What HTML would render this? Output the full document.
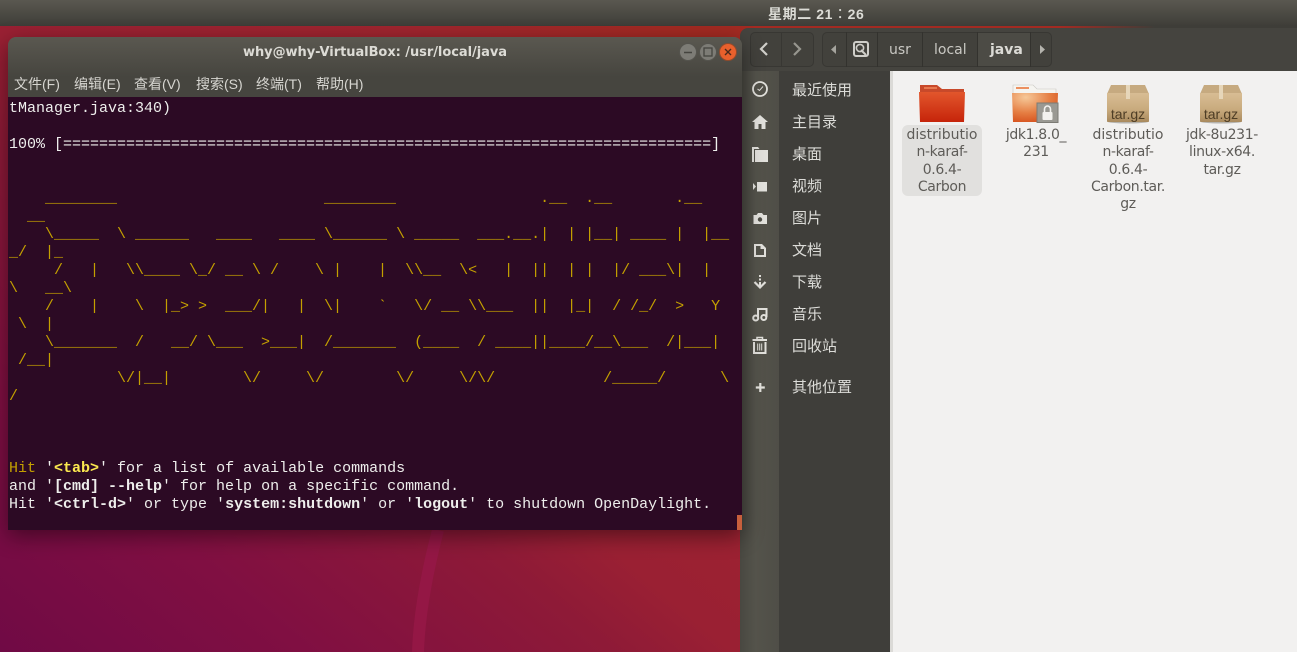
<!DOCTYPE html>
<html><head><meta charset="utf-8"><style>
html,body{margin:0;padding:0;width:1297px;height:652px;overflow:hidden;background:#8a1838}
*{box-sizing:border-box}
.a{position:absolute;white-space:pre}
#wall{position:absolute;left:0;top:26px;width:1297px;height:626px;background:linear-gradient(40deg,#700a45 0,#800f42 15%,#8e1a37 30%,#9a2033 36%,#a0252f 56%,#a32a22 70%)}
#top{position:absolute;left:0;top:0;width:1297px;height:26px;background:linear-gradient(#5a5850,#3e3d38)}
#term{position:absolute;left:8px;top:37px;width:734px;height:493px;border-radius:8px 8px 0 0;background:linear-gradient(#5a5850 0,#46453f 40px);box-shadow:0 6px 22px rgba(0,0,0,.45)}
#tb{position:absolute;left:8px;top:97px;width:734px;height:433px;background:#2c0a24}
.t{position:absolute;left:9px;font:15px/18px "Liberation Mono",monospace;white-space:pre;color:#eeeeec;height:18px}
.y{color:#c4a000}
b{font-weight:bold}
.m{position:absolute;top:75px;font:14px/18px "Liberation Sans","Noto Sans CJK SC",sans-serif;color:#d6d5d0;white-space:pre}
.s{position:absolute;left:792px;font:15px/20px "Noto Sans CJK SC",sans-serif;color:#dcdcd8;white-space:pre}
.f{position:absolute;font:14px/17.3px "DejaVu Sans",sans-serif;color:#5e5c58;text-align:center;white-space:pre;letter-spacing:-.35px}
.f i{font-style:normal;letter-spacing:0}
.p{position:absolute;top:40px;font:14px/20px "DejaVu Sans",sans-serif;color:#c9c8c3;white-space:pre}
</style></head><body>
<div id="wall"></div>
<svg class="a" style="left:0;top:0" width="1297" height="652"><path d="M438 530C425 580 419 620 418 652" fill="none" stroke="#941745" stroke-width="12"/></svg>
<div id="top"></div>
<div class="a" style="left:768px;top:5px;font:bold 14px/18px 'Liberation Sans','Noto Sans CJK SC',sans-serif;color:#dcdcd6;letter-spacing:.6px">星期二 21<span style="font-family:'Noto Sans CJK TC',sans-serif;font-weight:normal">：</span>26</div>

<!-- Nautilus -->
<div class="a" style="left:1060px;top:26px;width:237px;height:2px;background:linear-gradient(90deg,rgba(62,61,56,0),#3e3d38 40%)"></div>
<div class="a" style="left:740px;top:28px;width:557px;height:43px;background:#45443f;border-radius:8px 0 0 0"></div>
<div class="a" style="left:740px;top:71px;width:39px;height:581px;background:linear-gradient(90deg,#494841,#54534b 40%,#4f4e47)"></div>
<div class="a" style="left:779px;top:71px;width:111px;height:581px;background:#3f3e3a"></div>
<div class="a" style="left:890px;top:71px;width:407px;height:581px;background:#f2f1f0;border-left:3px solid #dbdad7"></div>

<div class="a" style="left:750px;top:32px;width:64px;height:35px;border:1px solid #383733;border-radius:5px;background:#42413c"></div>
<div class="a" style="left:781px;top:32px;width:1px;height:35px;background:#383733"></div>
<div class="a" style="left:822px;top:32px;width:230px;height:35px;border:1px solid #383733;border-radius:5px;background:#42413c"></div>
<div class="a" style="left:978px;top:33px;width:52px;height:33px;background:#4c4b45"></div>
<div class="a" style="left:846px;top:32px;width:1px;height:35px;background:#33322e"></div>
<div class="a" style="left:877px;top:32px;width:1px;height:35px;background:#33322e"></div>
<div class="a" style="left:922px;top:32px;width:1px;height:35px;background:#33322e"></div>
<div class="a" style="left:977px;top:32px;width:1px;height:35px;background:#33322e"></div>
<div class="a" style="left:1030px;top:32px;width:1px;height:35px;background:#33322e"></div>
<svg class="a" style="left:740px;top:30px" width="320" height="40">
<path d="M27 13l-6 6 6 6" fill="none" stroke="#d0cfca" stroke-width="2.2"/>
<path d="M54 13l6 6-6 6" fill="none" stroke="#97968f" stroke-width="2.2"/>
<path d="M96 15v9l-5-4.500z" fill="#a5a49e"/>
<path d="M300 15v9l5-4.500z" fill="#b5b4ae"/>
<rect x="114" y="12" width="14" height="14" rx="2" fill="none" stroke="#cfcec9" stroke-width="2"/>
<circle cx="120" cy="18" r="3.6" fill="none" stroke="#cfcec9" stroke-width="1.6"/><path d="M121 20l5 5" stroke="#cfcec9" stroke-width="2"/>
</svg>
<div class="p" style="left:889px">usr</div>
<div class="p" style="left:934px">local</div>
<div class="p" style="left:990px;font-weight:bold;color:#dcdbd6">java</div>

<!-- sidebar icons -->
<svg class="a" style="left:750px;top:78px" width="20" height="320" fill="none" stroke="#e2e1dc">
<circle cx="10" cy="11" r="7" stroke-width="1.8"/><path d="M7.500 11l2 1.500L13 8.500" stroke-width="1"/>
<path d="M2 44l8-7 8 7h-2.500v7h-4v-5h-3v5h-4v-7z" fill="#e2e1dc" stroke="none"/>
<path d="M2 69h6l1.500 2H4v13H2zM5 72h13v12H5z" fill="#e2e1dc" stroke="none"/>
<path d="M7 104h10v9.500H7zM3 105l3 3.500-3 3.500z" fill="#e2e1dc" stroke="none"/>
<path d="M3.500 137h3l1.500-2h4l1.500 2h3.500v9H3.500z" fill="#e2e1dc" stroke="none"/><circle cx="10" cy="141.500" r="2.200" fill="#4f4e47" stroke="none"/>
<path d="M4 166h8l4 4v9H4zM6 168v9h8v-6h-3.500v-3z" fill="#e2e1dc" stroke="none" fill-rule="evenodd"/>
<path d="M10 197v2M10 200.500v2M10 204v4" stroke-width="2"/><path d="M4.500 204l5.500 5.500 5.500-5.500" stroke-width="2.200"/>
<path d="M8 239v-8h8.500v8" stroke-width="2"/><circle cx="5.700" cy="240" r="2.500" stroke-width="2"/><circle cx="13.800" cy="239.500" r="2.500" stroke-width="2"/>
<path d="M2.500 262h14.500" stroke-width="2"/><path d="M7 261v-1.500h5.500v1.500" stroke-width="1.500"/><path d="M4 264v11h11.500v-11" stroke-width="2"/><path d="M7.700 265.500v7M9.700 265.500v7M11.700 265.500v7" stroke-width="1"/>
<path d="M10.300 305v9M5.800 309.500h9" stroke-width="2.200"/>
</svg>
<div class="s" style="top:80px">最近使用</div>
<div class="s" style="top:112px">主目录</div>
<div class="s" style="top:144px">桌面</div>
<div class="s" style="top:176px">视频</div>
<div class="s" style="top:208px">图片</div>
<div class="s" style="top:240px">文档</div>
<div class="s" style="top:272px">下载</div>
<div class="s" style="top:304px">音乐</div>
<div class="s" style="top:336px">回收站</div>
<div class="s" style="top:377px">其他位置</div>

<!-- files -->
<div class="a" style="left:902px;top:125px;width:80px;height:71px;background:#e1e0de;border-radius:6px"></div>
<svg class="a" style="left:915px;top:80px" width="340" height="48">
<defs>
<linearGradient id="r" x1="0" y1="0" x2="0" y2="1"><stop offset="0" stop-color="#e2562c"/><stop offset="1" stop-color="#c6240a"/></linearGradient>
<radialGradient id="o" cx=".3" cy=".15" r=".9"><stop offset="0" stop-color="#f6c898"/><stop offset=".6" stop-color="#e57d42"/><stop offset="1" stop-color="#d6521e"/></radialGradient>
<linearGradient id="k" x1="0" y1="0" x2="0" y2="1"><stop offset="0" stop-color="#d8bd94"/><stop offset=".55" stop-color="#c9ab7e"/><stop offset="1" stop-color="#a98a5e"/></linearGradient>
</defs>
<path d="M5 5h17l5 4h22v6H5z" fill="#c8492a"/><rect x="9" y="7" width="13" height="2" fill="#e8784f"/>
<path d="M4 12h46l-1 30H5z" fill="url(#r)"/>
<path d="M98 5h20l4 4h19v8H98z" fill="#f5f4f0" stroke="#c9c7c2" stroke-width=".6"/><rect x="101" y="7" width="13" height="2" fill="#ec9060"/>
<path d="M97 13h46l-1 29H98z" fill="url(#o)"/>
<rect x="122" y="23" width="21" height="19.500" fill="#9a9993" stroke="#7c7b75"/>
<rect x="127.500" y="32" width="10" height="8" rx="1" fill="#f3f2ef"/><path d="M129.500 32v-3a3 3 0 0 1 6 0v3" fill="none" stroke="#f3f2ef" stroke-width="1.600"/>
<ellipse cx="213" cy="41.500" rx="21" ry="2" fill="#9b9892" opacity=".7"/>
<path d="M196 5h34l4 9h-42z" fill="#c6aa80"/>
<path d="M192 13h42v28a1 1 0 0 1-1 1h-40a1 1 0 0 1-1-1z" fill="url(#k)"/>
<rect x="211" y="5" width="4" height="14" fill="#e6d6b9"/>
<text x="213" y="39" text-anchor="middle" font-family="Liberation Sans" font-size="14" fill="#4e3d25">tar.gz</text>
<ellipse cx="306" cy="41.500" rx="21" ry="2" fill="#9b9892" opacity=".7"/>
<path d="M289 5h34l4 9h-42z" fill="#c6aa80"/>
<path d="M285 13h42v28a1 1 0 0 1-1 1h-40a1 1 0 0 1-1-1z" fill="url(#k)"/>
<rect x="304" y="5" width="4" height="14" fill="#e6d6b9"/>
<text x="306" y="39" text-anchor="middle" font-family="Liberation Sans" font-size="14" fill="#4e3d25">tar.gz</text>
</svg>
<div class="f" style="left:892px;width:100px;top:127px"><i>distributio</i>
n-karaf-
0.6.4-
Carbon</div>
<div class="f" style="left:986px;width:100px;top:127px">jdk1.8.0_
231</div>
<div class="f" style="left:1078px;width:100px;top:127px"><i>distributio</i>
n-karaf-
0.6.4-
Carbon.tar.
gz</div>
<div class="f" style="left:1172px;width:100px;top:127px">jdk-8u231-
linux-x64.
tar.gz</div>

<!-- Terminal -->
<div id="term"></div>
<div class="a" style="left:243px;top:44px;font:bold 13px/18px 'DejaVu Sans',sans-serif;color:#dcdbd5;letter-spacing:-.05px">why@why-VirtualBox: /usr/local/java</div>
<svg class="a" style="left:676px;top:40px" width="66" height="24">
<circle cx="12" cy="12" r="8.500" fill="#7d7c76" stroke="#55544e"/><path d="M8 12.500h8" stroke="#45443f" stroke-width="1.500"/>
<circle cx="32" cy="12" r="8.500" fill="#7d7c76" stroke="#55544e"/><rect x="28" y="8" width="8" height="8" fill="none" stroke="#45443f" stroke-width="1.300"/>
<circle cx="52" cy="12" r="8.500" fill="#e9602c" stroke="#8f4a2c"/><path d="M49 9l6 6M55 9l-6 6" stroke="#4a2a1c" stroke-width="1.400"/>
</svg>
<div class="m" style="left:14px">文件(F)</div>
<div class="m" style="left:74px">编辑(E)</div>
<div class="m" style="left:134px">查看(V)</div>
<div class="m" style="left:196px">搜索(S)</div>
<div class="m" style="left:256px">终端(T)</div>
<div class="m" style="left:316px">帮助(H)</div>
<div id="tb"></div>
<div class="a" style="left:737px;top:515px;width:5px;height:15px;background:#c75f3c"></div>

<div class="t" style="top:100px">tManager.java:340)</div>
<div class="t" style="top:136px">100% [========================================================================]</div>
<div class="t y" style="top:190px">    ________                       ________                .__  .__       .__</div>
<div class="t y" style="top:208px">  __</div>
<div class="t y" style="top:226px">    \_____  \ ______   ____   ____ \______ \ _____  ___.__.|  | |__| ____ |  |__</div>
<div class="t y" style="top:244px">_/  |_</div>
<div class="t y" style="top:262px">     /   |   \\____ \_/ __ \ /    \ |    |  \\__  \&lt;   |  ||  | |  |/ ___\|  |</div>
<div class="t y" style="top:280px">\   __\</div>
<div class="t y" style="top:298px">    /    |    \  |_&gt; &gt;  ___/|   |  \|    `   \/ __ \\___  ||  |_|  / /_/  &gt;   Y</div>
<div class="t y" style="top:316px"> \  |</div>
<div class="t y" style="top:334px">    \_______  /   __/ \___  &gt;___|  /_______  (____  / ____||____/__\___  /|___|</div>
<div class="t y" style="top:352px"> /__|</div>
<div class="t y" style="top:370px">            \/|__|        \/     \/        \/     \/\/            /_____/      \</div>
<div class="t y" style="top:388px">/</div>
<div class="t" style="top:460px"><span class="y">Hit</span> '<b style="color:#fce94f">&lt;tab&gt;</b>' for a list of available commands</div>
<div class="t" style="top:478px">and '<b>[cmd] --help</b>' for help on a specific command.</div>
<div class="t" style="top:496px">Hit '<b>&lt;ctrl-d&gt;</b>' or type '<b>system:shutdown</b>' or '<b>logout</b>' to shutdown OpenDaylight.</div>
</body></html>
